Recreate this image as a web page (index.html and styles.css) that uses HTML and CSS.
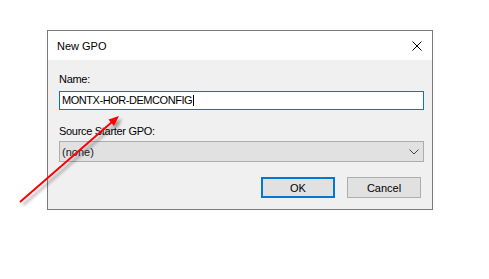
FILE: index.html
```html
<!DOCTYPE html>
<html lang="en">
<head>
    <meta charset="UTF-8">
    <title>New GPO</title>
    <link rel="stylesheet" href="styles.css">
</head>
<body>
    <div class="dialog">
        <div class="titlebar">
            <span class="title">New GPO</span>
            <svg class="close" width="10" height="10" viewBox="0 0 10 10">
                <path d="M0.5 0.5 L9.5 9.5 M9.5 0.5 L0.5 9.5" stroke="#000" stroke-width="1" fill="none"/>
            </svg>
        </div>
        <div class="body">
            <label class="field-label" for="gpoName">Name:</label>
            <div class="text-input" id="gpoName">MONTX-HOR-DEMCONFIG<span class="caret"></span></div>
            <label class="field-label second">Source Starter GPO:</label>
            <div class="combo">
                <span>(none)</span>
                <svg class="chevron" width="10" height="6" viewBox="0 0 10 6">
                    <path d="M0.5 0.5 L5 5 L9.5 0.5" stroke="#444" stroke-width="1" fill="none"/>
                </svg>
            </div>
            <div class="buttons">
                <button class="btn default">OK</button>
                <button class="btn">Cancel</button>
            </div>
        </div>
    </div>

    <!-- annotation arrow drawn over the screenshot -->
    <svg class="arrow" width="489" height="279" viewBox="0 0 489 279">
        <defs>
            <filter id="shadow" x="-20%" y="-20%" width="140%" height="140%">
                <feDropShadow dx="3" dy="3" stdDeviation="1.5" flood-color="#000" flood-opacity="0.35"/>
            </filter>
        </defs>
        <g filter="url(#shadow)">
            <line x1="20" y1="202" x2="112" y2="122" stroke="#ff0000" stroke-width="2"/>
            <polygon points="119,116 114,126 108.5,119.5" fill="#ff0000"/>
        </g>
    </svg>
</body>
</html>
```

FILE: styles.css
```css
body {
    margin: 0;
    background: #fff;
    font-family: 'Liberation Sans', Arial, sans-serif;
    font-size: 11px;
    color: #000;
}
.dialog {
    box-sizing: border-box;
    width: 386px;
    margin: 30px 0 0 47px;
    border: 1px solid #7a7a7a;
    background: #f0f0f0;
}
.titlebar {
    height: 29px;
    background: #fff;
    display: flex;
    align-items: center;
    justify-content: space-between;
    padding: 0 10px 0 9px;
}
.title {
    font-size: 11px;
    line-height: 14px;
}
.close {
    display: block;
}
.body {
    padding: 12px 8px 11px 11px;
    height: 149px;
    box-sizing: border-box;
}
.field-label {
    display: block;
    line-height: 14px;
    color: #000;
    letter-spacing: -0.3px;
}
.text-input {
    box-sizing: border-box;
    height: 19px;
    margin-top: 5px;
    border: 1px solid #0078d7;
    background: #fff;
    padding: 0 2px;
    line-height: 17px;
    letter-spacing: -0.45px;
    display: flex;
    align-items: center;
}
.caret {
    display: inline-block;
    width: 1px;
    height: 11px;
    background: #000;
    margin-left: 1px;
}
.field-label.second {
    margin-top: 14px;
}
.combo {
    box-sizing: border-box;
    height: 21px;
    margin-top: 3px;
    border: 1px solid #adadad;
    background: #e1e1e1;
    display: flex;
    align-items: center;
    justify-content: space-between;
    padding: 0 4px 0 2px;
    color: #222;
}
.chevron {
    display: block;
}
.buttons {
    display: flex;
    justify-content: flex-end;
    gap: 12px;
    margin-top: 15px;
    padding-right: 3px;
}
.btn {
    box-sizing: border-box;
    width: 74px;
    height: 21px;
    border: 1px solid #adadad;
    background: #e1e1e1;
    font-family: 'Liberation Sans', Arial, sans-serif;
    font-size: 11px;
    color: #000;
    padding: 0;
}
.btn.default {
    border: 2px solid #0078d7;
}
.arrow {
    position: absolute;
    left: 0;
    top: 0;
    pointer-events: none;
}
```
